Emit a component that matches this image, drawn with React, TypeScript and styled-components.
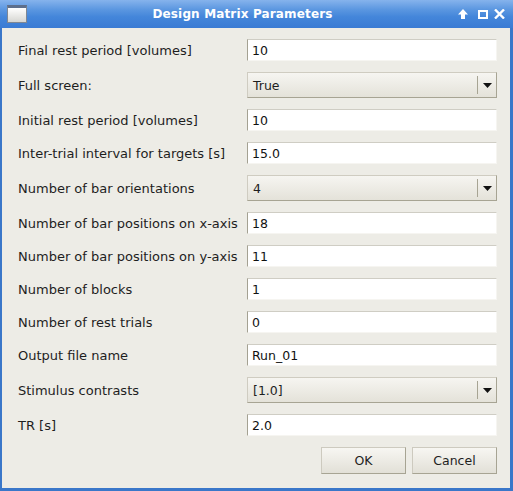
import React from "react";
import styled, { createGlobalStyle } from "styled-components";

const Global = createGlobalStyle`
  html, body { margin: 0; padding: 0; background: #edece6; }
  body { font-family: "DejaVu Sans", "Liberation Sans", sans-serif; }
  * { box-sizing: border-box; }
`;

const Window = styled.div`
  width: 513px;
  height: 491px;
  display: flex;
  flex-direction: column;
  background: #3a77c9;
  padding: 0 3px 3px 2px;
`;

const TitleBar = styled.div`
  height: 28px;
  margin: 0 -3px 0 -2px;
  display: flex;
  align-items: center;
  padding: 0 8px 0 7px;
  background: linear-gradient(#86b3ec 0%, #5a96e0 35%, #4486da 60%, #3a7bd4 100%);
`;

const AppIcon = styled.div`
  width: 20px;
  height: 18px;
  border: 1px solid #7e8794;
  border-top: 3px solid #5d6f8c;
  background: linear-gradient(#ffffff, #d6d6d2);
`;

const Title = styled.div`
  flex: 1;
  text-align: center;
  color: #ffffff;
  font-weight: bold;
  font-size: 12px;
  letter-spacing: 0.15px;
`;

const Controls = styled.div`
  display: flex;
  align-items: center;
`;

const Ctl = styled.span<{ $gap: number }>`
  display: flex;
  margin-left: ${(p) => p.$gap}px;
`;

const Body = styled.div`
  flex: 1;
  background: #edece6;
  padding: 11px 13px 0 16px;
  display: flex;
  flex-direction: column;
`;

const Form = styled.div`
  display: grid;
  grid-template-columns: 229px 250px;
  row-gap: 11px;
  align-items: center;
`;

const Label = styled.div`
  font-size: 13px;
  color: #1e1e1e;
  white-space: nowrap;
`;

const Input = styled.div`
  height: 22px;
  background: #ffffff;
  border-top: 1px solid #cfcdc4;
  border-left: 1px solid #a4a192;
  border-right: 1px solid #f6f5f1;
  border-bottom: 1px solid #f6f5f1;
  font-size: 12.5px;
  color: #111;
  padding-left: 4px;
  display: flex;
  align-items: center;
`;

const Combo = styled.div`
  height: 26px;
  display: flex;
  align-items: center;
  background: linear-gradient(#f6f5f1, #e4e2d9);
  border: 1px solid #cfccc1;
  border-right-color: #a7a493;
  border-bottom-color: #a7a493;
  font-size: 12.5px;
  color: #1e1e1e;
`;

const ComboText = styled.div`
  flex: 1;
  padding-left: 5px;
`;

const ComboArrow = styled.div`
  width: 19px;
  height: 18px;
  border-left: 1px solid #a7a493;
  display: flex;
  align-items: center;
  justify-content: center;
`;

const Buttons = styled.div`
  display: flex;
  justify-content: flex-end;
  gap: 6px;
  margin-top: 11px;
`;

const Button = styled.div`
  width: 85px;
  height: 27px;
  display: flex;
  align-items: center;
  justify-content: center;
  font-size: 12.5px;
  color: #1e1e1e;
  background: linear-gradient(#f7f6f2, #e2e0d7);
  border: 1px solid #cdcabf;
  border-right-color: #a7a493;
  border-bottom-color: #a7a493;
`;

type Row = { label: string; value: string; combo?: boolean };

const rows: Row[] = [
  { label: "Final rest period [volumes]", value: "10" },
  { label: "Full screen:", value: "True", combo: true },
  { label: "Initial rest period [volumes]", value: "10" },
  { label: "Inter-trial interval for targets [s]", value: "15.0" },
  { label: "Number of bar orientations", value: "4", combo: true },
  { label: "Number of bar positions on x-axis", value: "18" },
  { label: "Number of bar positions on y-axis", value: "11" },
  { label: "Number of blocks", value: "1" },
  { label: "Number of rest trials", value: "0" },
  { label: "Output file name", value: "Run_01" },
  { label: "Stimulus contrasts", value: "[1.0]", combo: true },
  { label: "TR [s]", value: "2.0" },
];

const Arrow = () => (
  <svg width="9" height="5" viewBox="0 0 9 5">
    <path d="M0 0H9L4.5 5Z" fill="#111" />
  </svg>
);

export default function App() {
  return (
    <>
      <Global />
      <Window>
        <TitleBar>
          <AppIcon />
          <Title>Design Matrix Parameters</Title>
          <Controls>
            <Ctl $gap={0}>
              <svg width="10" height="10" viewBox="0 0 10 10">
                <path d="M5 0L10 5.5H7V10H3V5.5H0Z" fill="#fff" />
              </svg>
            </Ctl>
            <Ctl $gap={10}>
              <svg width="10" height="9" viewBox="0 0 10 9">
                <rect x="1" y="1" width="8" height="7" fill="none" stroke="#fff" strokeWidth="2" />
              </svg>
            </Ctl>
            <Ctl $gap={6}>
              <svg width="11" height="10" viewBox="0 0 11 10">
                <path d="M1 0.5L10 9.5M10 0.5L1 9.5" stroke="#fff" strokeWidth="2.4" />
              </svg>
            </Ctl>
          </Controls>
        </TitleBar>
        <Body>
          <Form>
            {rows.map((r) => (
              <React.Fragment key={r.label}>
                <Label>{r.label}</Label>
                {r.combo ? (
                  <Combo>
                    <ComboText>{r.value}</ComboText>
                    <ComboArrow>
                      <Arrow />
                    </ComboArrow>
                  </Combo>
                ) : (
                  <Input>{r.value}</Input>
                )}
              </React.Fragment>
            ))}
          </Form>
          <Buttons>
            <Button>OK</Button>
            <Button>Cancel</Button>
          </Buttons>
        </Body>
      </Window>
    </>
  );
}
